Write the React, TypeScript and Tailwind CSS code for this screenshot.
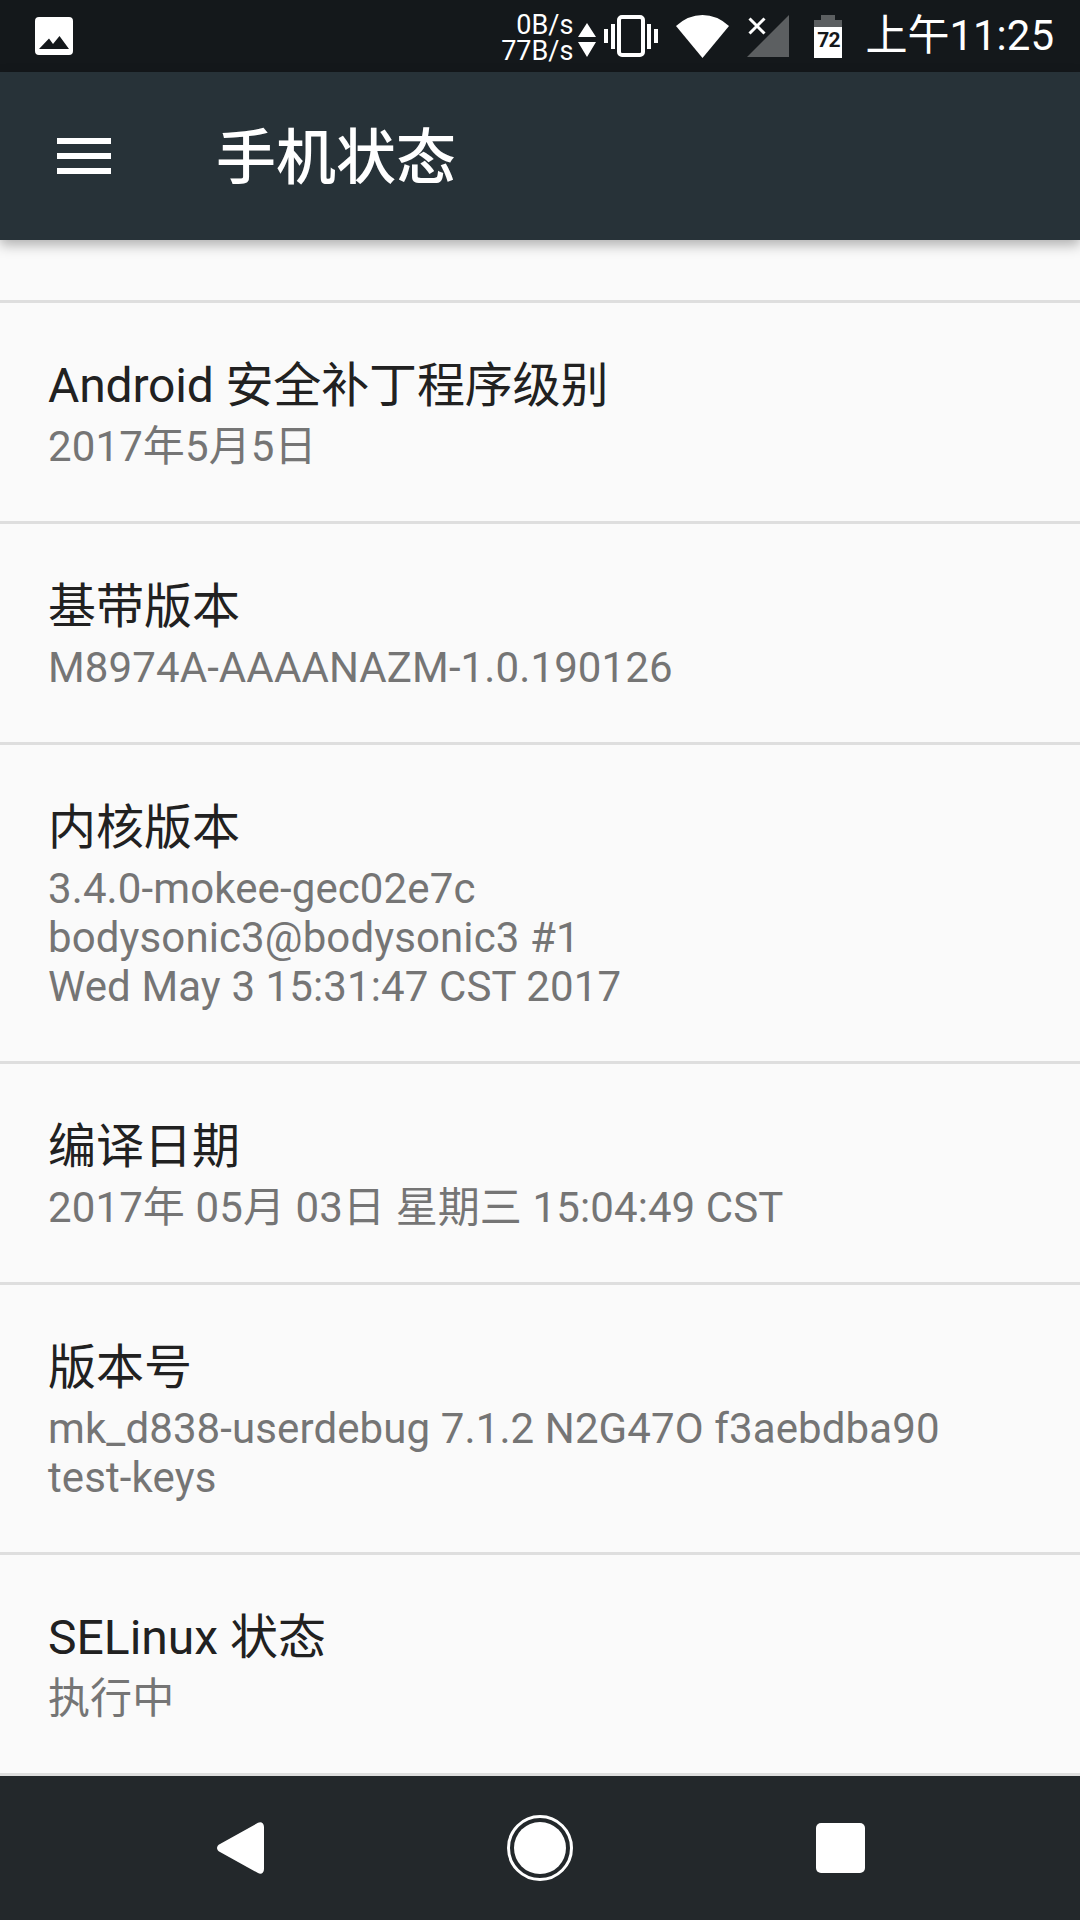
import React from "react";

function Row({ title, lines, titleClass = "" }: { title: string; lines: string[]; titleClass?: string }) {
  return (
    <div className="border-b-[3px] border-[#dedede] px-12 pt-[46px] pb-[50px]">
      <div className={`text-[48px] leading-[73px] h-[73px] text-[#212121] whitespace-pre ${titleClass}`}>{title}</div>
      {lines.map((l) => (
        <div key={l} className="text-[42px] leading-[49px] text-[#757575] whitespace-pre tracking-[0.11px]">{l}</div>
      ))}
    </div>
  );
}

function Vibrate() {
  return (
    <svg width="54" height="42" viewBox="0 0 54 42" className="block" fill="#fff">
      <rect x="0" y="14" width="4" height="14" />
      <rect x="7" y="9" width="4" height="25" />
      <rect x="15" y="2" width="24" height="38" rx="3" fill="none" stroke="#fff" strokeWidth="4" />
      <rect x="43" y="9" width="4" height="25" />
      <rect x="50" y="14" width="4" height="14" />
    </svg>
  );
}

export default function App() {
  return (
    <div className="w-[1080px] h-[1920px] overflow-hidden flex flex-col bg-[#fafafa] font-['Roboto','Noto_Sans_CJK_SC',sans-serif]">
      <div className="relative z-10 h-[72px] shrink-0 bg-[#14181b] flex items-center text-white">
        <svg width="38" height="38" viewBox="0 0 38 38" className="ml-[35px] block">
          <path fill="#fff" fillRule="evenodd" d="M4 0h30a4 4 0 0 1 4 4v30a4 4 0 0 1-4 4H4a4 4 0 0 1-4-4V4a4 4 0 0 1 4-4zM4 32h30L24.500 19 18 27l-4-5.500z" />
        </svg>
        <div className="ml-auto w-[80px] flex flex-col items-end text-[27px] leading-[26px] mt-[3px]">
          <span>0B/s</span>
          <span>77B/s</span>
        </div>
        <svg width="18" height="34" viewBox="0 0 18 34" className="ml-[5px] block mt-[8px]" fill="#fff">
          <path d="M9 0l9 14H0zM0 19h18l-9 15z" />
        </svg>
        <div className="ml-[8px]"><Vibrate /></div>
        <svg width="53" height="43" viewBox="0 0 53 43" className="ml-[18px] block" fill="#fff">
          <path d="M26.500 43L0 11Q12 0 26.500 0T53 11z" />
        </svg>
        <svg width="42" height="44" viewBox="0 0 42 44" className="ml-[18px] block">
          <path d="M42 1v42H0z" fill="#5c5f61" />
          <path d="M2.500 4.500l15 15M17.500 4.500l-15 15" stroke="#fff" strokeWidth="3" />
        </svg>
        <div className="ml-[25px] w-[28px] h-[43px] flex flex-col items-center">
          <div className="w-[14px] h-[5px] bg-[#5c5f61] shrink-0" />
          <div className="w-full h-[7px] bg-[#5c5f61] shrink-0" />
          <div className="w-full flex-1 bg-white text-[#14181b] text-[21px] leading-[24px] font-bold text-center tracking-[-1px] pt-[1px]">72</div>
        </div>
        <div className="ml-[23px] mr-[26px] text-[42px] leading-[50px] whitespace-pre">上午11:25</div>
      </div>

      <div className="relative z-10 h-[168px] shrink-0 bg-[#273238] flex items-center shadow-[0_5px_12px_rgba(0,0,0,0.3)]">
        <div className="ml-[57px] w-[54px] flex flex-col gap-[9px]">
          <div className="h-[6px] bg-white" />
          <div className="h-[6px] bg-white" />
          <div className="h-[6px] bg-white" />
        </div>
        <div className="ml-[105px] mt-[5px] text-[60px] leading-[80px] font-medium text-white">手机状态</div>
      </div>

      <div className="flex-1 min-h-0 -mt-[39px]">
        <div className="border-b-[3px] border-[#dedede] px-12 pb-[50px] text-[42px] leading-[49px] text-[#757575] tracking-[0.11px]">7.1.2</div>
        <Row title="Android 安全补丁程序级别" titleClass="tracking-[-0.15px]" lines={["2017年5月5日"]} />
        <Row title="基带版本" lines={["M8974A-AAAANAZM-1.0.190126"]} />
        <Row title="内核版本" lines={["3.4.0-mokee-gec02e7c", "bodysonic3@bodysonic3 #1", "Wed May 3 15:31:47 CST 2017"]} />
        <Row title="编译日期" lines={["2017年 05月 03日 星期三 15:04:49 CST"]} />
        <Row title="版本号" lines={["mk_d838-userdebug 7.1.2 N2G47O f3aebdba90", "test-keys"]} />
        <Row title="SELinux 状态" lines={["执行中"]} />
      </div>

      <div className="relative z-10 h-[144px] shrink-0 bg-[#23282b] flex items-center pl-[217px] gap-x-[243px]">
        <svg width="47" height="52" viewBox="0 0 47 52" className="block" fill="#fff">
          <path d="M41 .800C44 -.800 47 1 47 5V47C47 51 44 52.800 41 51L3 30C-1 28 -1 24 3 22Z" />
        </svg>
        <svg width="66" height="66" viewBox="0 0 66 66" className="block">
          <circle cx="33" cy="33" r="31.500" fill="none" stroke="#fff" strokeWidth="3" />
          <circle cx="33" cy="33" r="26" fill="#fff" />
        </svg>
        <div className="w-[49px] h-[50px] bg-white rounded-[5px]" />
      </div>
    </div>
  );
}
